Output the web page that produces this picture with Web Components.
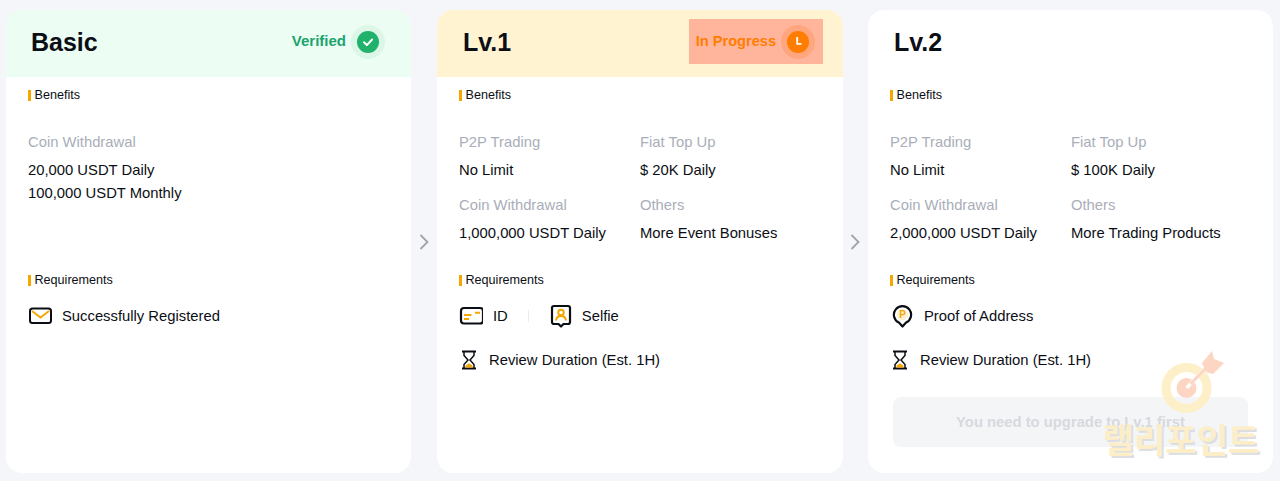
<!DOCTYPE html>
<html>
<head>
<meta charset="utf-8">
<title>Levels</title>
<style>
  html, body { margin: 0; height: 481px; overflow: hidden; background: #f5f6fa; }
  body { font-family: "Liberation Sans", Arial, sans-serif; }
</style>
</head>
<body>
<level-page>
  <level-card title-text="Basic" tone="done">
    <status-badge slot="status" kind="done">Verified</status-badge>
    <card-section heading="Benefits" class="benefits">
      <benefit-grid>
        <benefit-item label="Coin Withdrawal"><div>20,000 USDT Daily</div><div>100,000 USDT Monthly</div></benefit-item>
      </benefit-grid>
    </card-section>
    <card-section heading="Requirements">
      <req-row><req-item icon="mail">Successfully Registered</req-item></req-row>
    </card-section>
  </level-card>

  <step-arrow></step-arrow>

  <level-card title-text="Lv.1" tone="active">
    <status-badge slot="status" kind="active">In Progress</status-badge>
    <card-section heading="Benefits" class="benefits">
      <benefit-grid>
        <benefit-item label="P2P Trading">No Limit</benefit-item>
        <benefit-item label="Fiat Top Up">$ 20K Daily</benefit-item>
        <benefit-item label="Coin Withdrawal">1,000,000 USDT Daily</benefit-item>
        <benefit-item label="Others">More Event Bonuses</benefit-item>
      </benefit-grid>
    </card-section>
    <card-section heading="Requirements">
      <req-row>
        <req-item icon="id">ID</req-item>
        <req-divider></req-divider>
        <req-item icon="selfie">Selfie</req-item>
      </req-row>
      <req-row><req-item icon="hourglass">Review Duration (Est. 1H)</req-item></req-row>
    </card-section>
  </level-card>

  <step-arrow></step-arrow>

  <level-card title-text="Lv.2">
    <card-section heading="Benefits" class="benefits">
      <benefit-grid>
        <benefit-item label="P2P Trading">No Limit</benefit-item>
        <benefit-item label="Fiat Top Up">$ 100K Daily</benefit-item>
        <benefit-item label="Coin Withdrawal">2,000,000 USDT Daily</benefit-item>
        <benefit-item label="Others">More Trading Products</benefit-item>
      </benefit-grid>
    </card-section>
    <card-section heading="Requirements">
      <req-row><req-item icon="pin">Proof of Address</req-item></req-row>
      <req-row><req-item icon="hourglass">Review Duration (Est. 1H)</req-item></req-row>
    </card-section>
    <upgrade-button slot="action">You need to upgrade to Lv.1 first</upgrade-button>
  </level-card>
</level-page>
<point-watermark></point-watermark>

<script>
class LevelPage extends HTMLElement {
  constructor() {
    super();
    this.attachShadow({ mode: "open" });
    this.shadowRoot.innerHTML = `
    <style>
      :host {
        display: grid;
        grid-template-columns: 405px 26px 406px 25px 405px;
        height: 463px;
        padding: 10px 7px 8px 6px;
      }
    </style>
    <slot></slot>`;
  }
}

class LevelCard extends HTMLElement {
  constructor() {
    super();
    this.attachShadow({ mode: "open" });
  }

  connectedCallback() {
    this.shadowRoot.innerHTML = `
    <style>
      :host {
        display: flex;
        flex-direction: column;
        background: #fff;
        border-radius: 16px;
        overflow: hidden;
        color: #0b0e14;
      }
      .head {
        height: 63px;
        padding: 0 20px 4px 26px;
        display: flex;
        align-items: center;
        justify-content: space-between;
        flex: none;
      }
      :host([tone="done"]) .head { background: #ecfdf3; padding: 0 18px 4px 25px; }
      :host([tone="active"]) .head { background: #fff3d1; }
      h2 { margin: 0; font-size: 25px; line-height: 30px; font-weight: 700; }
      .body { padding: 0 22px; flex: 1; }
      .action { padding: 0 25px 26px; }
    </style>
    <div class="head"><h2>${this.getAttribute("title-text")}</h2><slot name="status"></slot></div>
    <div class="body"><slot></slot></div>
    <div class="action"><slot name="action"></slot></div>`;
  }
}

class StatusBadge extends HTMLElement {
  constructor() {
    super();
    this.attachShadow({ mode: "open" });
  }

  connectedCallback() {
    const done = this.getAttribute("kind") === "done";
    const mark = done
      ? `<path d="M7 11.300l2.900 2.800 5.200-5.600" fill="none" stroke="#fff" stroke-width="2" stroke-linecap="round" stroke-linejoin="round"/>`
      : `<path d="M10.200 6v6.800h4.300" fill="none" stroke="#fff" stroke-width="1.800"/>`;
    this.shadowRoot.innerHTML = `
    <style>
      :host {
        display: flex;
        align-items: center;
        gap: 5px;
        height: 45px;
        padding: 0 8px 0 7px;
        font-size: 15px;
        font-weight: 700;
        color: #1ba36e;
      }
      :host([kind="active"]) { background: #ffb59c; color: #ff7d00; font-size: 14.600px; }
      .halo {
        width: 34px;
        height: 34px;
        border-radius: 50%;
        display: grid;
        place-items: center;
        background: #dcf6e7;
      }
      :host([kind="active"]) .halo { background: #ffa67f; }
      .dot { width: 22px; height: 22px; border-radius: 50%; background: #20b26c; }
      :host([kind="active"]) .dot { background: #ff7d00; }
      svg { display: block; }
      span { position: relative; top: -1px; }
    </style>
    <span><slot></slot></span>
    <div class="halo"><div class="dot"><svg width="22" height="22" viewBox="0 0 22 22">${mark}</svg></div></div>`;
  }
}

class CardSection extends HTMLElement {
  constructor() {
    super();
    this.attachShadow({ mode: "open" });
  }

  connectedCallback() {
    this.shadowRoot.innerHTML = `
    <style>
      :host { display: block; padding-top: 11px; }
      :host(.benefits) { height: 174px; }
      .title {
        display: flex;
        align-items: center;
        gap: 4px;
        height: 14px;
        font-size: 12.600px;
        margin-bottom: 7px;
      }
      .title::before { content: ""; width: 2.500px; height: 11px; background: #f7a600; }
    </style>
    <div class="title">${this.getAttribute("heading")}</div>
    <slot></slot>`;
  }
}

class BenefitGrid extends HTMLElement {
  constructor() {
    super();
    this.attachShadow({ mode: "open" });
    this.shadowRoot.innerHTML = `
    <style>
      :host {
        display: grid;
        grid-template-columns: 181px 181px;
        row-gap: 13px;
        padding-top: 23px;
      }
    </style>
    <slot></slot>`;
  }
}

class BenefitItem extends HTMLElement {
  constructor() {
    super();
    this.attachShadow({ mode: "open" });
  }

  connectedCallback() {
    this.shadowRoot.innerHTML = `
    <style>
      :host { display: block; font-size: 14.800px; line-height: 23px; }
      .label { color: #a9aeb8; height: 27px; line-height: 20px; }
    </style>
    <div class="label">${this.getAttribute("label")}</div>
    <slot></slot>`;
  }
}

class ReqRow extends HTMLElement {
  constructor() {
    super();
    this.attachShadow({ mode: "open" });
    this.shadowRoot.innerHTML = `
    <style>
      :host {
        display: flex;
        align-items: center;
        height: 44px;
        font-size: 14.800px;
      }
    </style>
    <slot></slot>`;
  }
}

class ReqDivider extends HTMLElement {
  constructor() {
    super();
    this.attachShadow({ mode: "open" });
    this.shadowRoot.innerHTML = `
    <style>
      :host { display: block; width: 1px; height: 12px; margin: 0 21px 0 20px; background: #e9ebef; }
    </style>`;
  }
}

const REQ_ICONS = {
  mail: { w: 24, h: 18, svg: `
    <rect x="2" y="1.500" width="21" height="14.500" rx="2.500" fill="none" stroke="#0b0e14" stroke-width="2"/>
    <path d="M4 4l8.500 6.500L21 4" fill="none" stroke="#f7a600" stroke-width="1.800"/>` },
  id: { w: 24, h: 20, svg: `
    <rect x="2" y="2" width="22" height="15.500" rx="3" fill="none" stroke="#0b0e14" stroke-width="2.200"/>
    <path d="M5 9h7.500M5 13h5M16 6.800h5" fill="none" stroke="#f7a600" stroke-width="2"/>` },
  selfie: { w: 22, h: 24, svg: `
    <path d="M4 2h14a2 2 0 0 1 2 2v14a2 2 0 0 1-2 2h-4.500L11 22.500 8.500 20H4a2 2 0 0 1-2-2V4a2 2 0 0 1 2-2z" fill="none" stroke="#0b0e14" stroke-width="2.200" stroke-linejoin="round"/>
    <circle cx="11" cy="8.500" r="2.800" fill="none" stroke="#f7a600" stroke-width="2"/>
    <path d="M6 16.500c.4-3.200 2.400-4.600 5-4.600s4.600 1.400 5 4.600" fill="none" stroke="#f7a600" stroke-width="2"/>` },
  pin: { w: 24, h: 24, svg: `
    <path d="M12.500 22.500l-3.600-4a8.600 8.600 0 1 1 7.200 0z" fill="none" stroke="#0b0e14" stroke-width="2.200" stroke-linejoin="round"/>
    <circle cx="12.500" cy="10.800" r="5.600" fill="#fff2d6"/>
    <text x="12.500" y="14.300" text-anchor="middle" font-family="Liberation Sans" font-weight="700" font-size="10" fill="#f7a600">P</text>` },
  hourglass: { w: 20, h: 20, svg: `
    <path d="M3 1.500h14M3 18.500h14" fill="none" stroke="#0b0e14" stroke-width="2"/>
    <path d="M5 2v3.500L9 10l-4 4.500V18M15 2v3.500L11 10l4 4.500V18" fill="none" stroke="#0b0e14" stroke-width="1.500"/>
    <path d="M6.500 17.500v-1.800l3.500-2.500 3.500 2.500v1.800z" fill="#f7a600"/>` },
};

class ReqItem extends HTMLElement {
  constructor() {
    super();
    this.attachShadow({ mode: "open" });
  }

  connectedCallback() {
    const icon = REQ_ICONS[this.getAttribute("icon")];
    this.shadowRoot.innerHTML = `
    <style>
      :host { display: flex; align-items: center; gap: 10px; }
      svg { display: block; flex: none; }
    </style>
    <svg width="${icon.w}" height="${icon.h}" viewBox="0 0 ${icon.w} ${icon.h}">${icon.svg}</svg>
    <slot></slot>`;
  }
}

class StepArrow extends HTMLElement {
  constructor() {
    super();
    this.attachShadow({ mode: "open" });
    this.shadowRoot.innerHTML = `
    <style>
      :host { display: grid; place-items: center; }
      :host(:last-of-type) { margin-left: -1px; }
      svg { display: block; }
    </style>
    <svg width="12" height="18" viewBox="0 0 12 18">
      <path d="M2.500 2l7 7-7 7" fill="none" stroke="#9ea3ad" stroke-width="1.800"/>
    </svg>`;
  }
}

class UpgradeButton extends HTMLElement {
  constructor() {
    super();
    this.attachShadow({ mode: "open" });
    this.shadowRoot.innerHTML = `
    <style>
      :host {
        display: grid;
        place-items: center;
        height: 50px;
        border-radius: 8px;
        background: #f4f5f7;
        color: #d7d9de;
        font-size: 14.800px;
        font-weight: 700;
      }
    </style>
    <slot></slot>`;
  }
}

class PointWatermark extends HTMLElement {
  constructor() {
    super();
    this.attachShadow({ mode: "open" });
    this.shadowRoot.innerHTML = `
    <style>
      :host {
        position: absolute;
        left: 1086px;
        top: 347px;
        width: 190px;
        display: flex;
        flex-direction: column;
        align-items: center;
        pointer-events: none;
      }
      svg { display: block; margin-left: 22px; }
      .name {
        font-family: "Noto Sans CJK KR", sans-serif;
        font-size: 34px;
        line-height: 38px;
        font-weight: 700;
        color: #fdeec6;
        text-shadow: 2px 2px 0 #dcdde0;
        margin-top: 1px;
        opacity: .95;
      }
    </style>
    <svg width="66" height="72" viewBox="0 0 66 72">
      <circle cx="27.500" cy="41" r="20.500" fill="none" stroke="#fdf0c8" stroke-width="9"/>
      <circle cx="27.500" cy="41" r="10" fill="#fdd5c3"/>
      <path d="M27.500 41L49 19" stroke="#fff" stroke-width="3.500"/>
      <path d="M31.500 37L49 19" stroke="#fdd5c3" stroke-width="3"/>
      <path d="M43 16l10-12 2 8 10 4-11 11-7-2z" fill="#fdd5c3"/>
    </svg>
    <div class="name">랠리포인트</div>`;
  }
}

customElements.define("level-page", LevelPage);
customElements.define("level-card", LevelCard);
customElements.define("status-badge", StatusBadge);
customElements.define("card-section", CardSection);
customElements.define("benefit-grid", BenefitGrid);
customElements.define("benefit-item", BenefitItem);
customElements.define("req-row", ReqRow);
customElements.define("req-divider", ReqDivider);
customElements.define("req-item", ReqItem);
customElements.define("step-arrow", StepArrow);
customElements.define("upgrade-button", UpgradeButton);
customElements.define("point-watermark", PointWatermark);
</script>
</body>
</html>
